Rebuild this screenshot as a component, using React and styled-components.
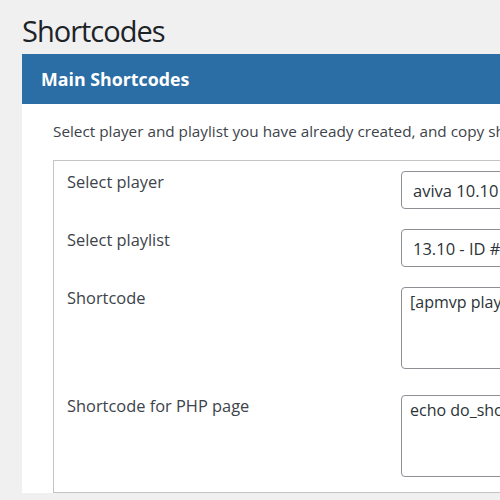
import styled, { createGlobalStyle } from 'styled-components';

const Global = createGlobalStyle`
  html, body {
    margin: 0;
    background: #f0f0f1;
    overflow: hidden;
  }
  body {
    font-family: "Open Sans", "Noto Sans", sans-serif;
    color: #3c434a;
  }
`;

const Wrap = styled.div`
  padding: 0 0 0 22px;
  width: 900px;
`;

const Title = styled.h1`
  margin: 0;
  padding: 14px 0 7px;
  font-size: 29px;
  font-weight: 400;
  letter-spacing: -1px;
  line-height: 33px;
  color: #1d2327;
`;

const Panel = styled.div`
  background: #fff;
`;

const PanelHead = styled.div`
  background: #2b6ea5;
  color: #fff;
  height: 50px;
  display: flex;
  align-items: center;
  padding-left: 19px;
  font-size: 17.8px;
  font-weight: 700;
`;

const PanelBody = styled.div`
  padding: 14px 0 0 31px;
`;

const Intro = styled.p`
  margin: 0 0 16px;
  font-size: 15.3px;
  line-height: 26px;
  white-space: nowrap;
`;

const Table = styled.div`
  border: 1px solid #c3c4c7;
  border-right: none;
  display: grid;
  grid-template-columns: 334px 1fr;
  padding: 10px 0 15px 13px;
`;

const Row = styled.div`
  display: contents;
`;

const Label = styled.div`
  font-size: 16.4px;
  line-height: 22px;
  margin-bottom: ${p => p.$gap}px;
`;

const Field = styled.div`
  margin-bottom: ${p => p.$gap}px;
`;

const Select = styled.select`
  appearance: none;
  display: block;
  width: 300px;
  height: 38px;
  padding: 0 11px;
  border: 1px solid #8c8f94;
  border-radius: 4px;
  background: #fff;
  font-family: inherit;
  font-size: 16.5px;
  color: #2c3338;
`;

const Code = styled.textarea`
  display: block;
  box-sizing: border-box;
  width: 560px;
  height: 82px;
  padding: 2px 8px;
  border: 1px solid #8c8f94;
  border-radius: 4px;
  background: #fff;
  font-family: inherit;
  font-size: 16px;
  line-height: 24px;
  color: #2c3338;
  resize: none;
  overflow: hidden;
`;

const rows = [
  { label: 'Select player', kind: 'select', value: 'aviva 10.10 - ID #10', gap: 20 },
  { label: 'Select playlist', kind: 'select', value: '13.10 - ID #13', gap: 20 },
  { label: 'Shortcode', kind: 'code', value: '[apmvp player_id="10" playlist_id="13"]', gap: 26 },
  { label: 'Shortcode for PHP page', kind: 'code', value: 'echo do_shortcode(\'[apmvp player_id="10" playlist_id="13"]\');', gap: 0 },
];

export default function App() {
  return (
    <Wrap>
      <Global />
      <Title>Shortcodes</Title>
      <Panel>
        <PanelHead>Main Shortcodes</PanelHead>
        <PanelBody>
          <Intro>Select player and playlist you have already created, and copy shortcode into your page.</Intro>
          <Table>
            {rows.map(r => (
              <Row key={r.label}>
                <Label $gap={r.gap}>{r.label}</Label>
                <Field $gap={r.gap}>
                  {r.kind === 'select' ? (
                    <Select defaultValue={r.value}>
                      <option>{r.value}</option>
                    </Select>
                  ) : (
                    <Code readOnly defaultValue={r.value} />
                  )}
                </Field>
              </Row>
            ))}
          </Table>
        </PanelBody>
      </Panel>
    </Wrap>
  );
}
